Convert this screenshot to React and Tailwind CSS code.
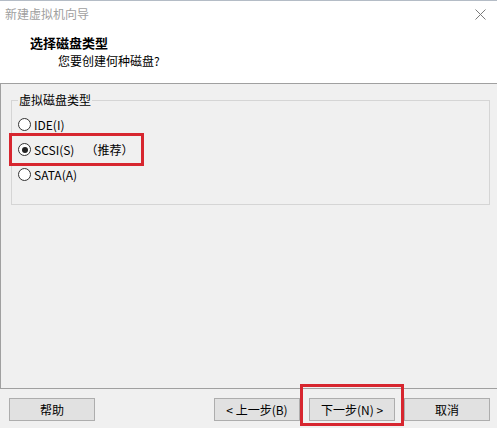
import React from 'react';

const font = { fontFamily: '"Microsoft YaHei", "Noto Sans CJK SC", "Noto Sans", sans-serif' };

function Radio({ checked, label, extra }) {
  return (
    <label className="flex h-[25px] items-center gap-[3px] text-[12px] text-black">
      <span className="flex h-[13px] w-[13px] items-center justify-center rounded-full border border-[#333] bg-white">
        {checked && <span className="h-[6px] w-[6px] rounded-full bg-[#222]" />}
      </span>
      <span>{label}</span>
      {extra && <span className="ml-[8px]">{extra}</span>}
    </label>
  );
}

function Btn({ children }) {
  return (
    <button className="flex h-[23px] w-[86px] items-center justify-center border border-[#adadad] bg-[#e1e1e1] text-[12px] text-black">
      {children}
    </button>
  );
}

export default function App() {
  return (
    <div className="flex h-[428px] w-[499px] bg-white" style={font}>
      <div className="flex w-[497px] flex-col border-t border-[#b4bcc6]">
        <div className="flex h-[26px] items-center justify-between pl-[5px] pr-[10px]">
          <span className="text-[12px] text-[#a0a0a0]">新建虚拟机向导</span>
          <svg width="11" height="11" viewBox="0 0 11 11" className="mr-[1px]">
            <path d="M0.5 0.5 L10.5 10.5 M10.5 0.5 L0.5 10.5" stroke="#7a7a7a" strokeWidth="1" />
          </svg>
        </div>
        <div className="h-[57px] border-b border-[#a0a0a0] pt-[7px]">
          <div className="pl-[30px] text-[13px] font-bold leading-[18px] text-black">选择磁盘类型</div>
          <div className="pl-[58px] text-[12px] leading-[18px] text-black">您要创建何种磁盘?</div>
        </div>
        <div className="flex flex-1 flex-col border-b border-l border-[#a0a0a0] bg-[#f0f0f0]">
          <div className="relative flex-1 pl-[10px] pr-[7px] pt-[9px]">
            <fieldset className="h-[112px] border border-[#d5d5d5] px-[6px]">
              <legend className="px-[1px] text-[12px] leading-[14px] text-black">虚拟磁盘类型</legend>
              <div className="pt-[5px]">
                <Radio label="IDE(I)" />
                <Radio checked label="SCSI(S)" extra="（推荐）" />
                <Radio label="SATA(A)" />
              </div>
            </fieldset>
            <div className="absolute left-[8px] top-[49px] h-[33px] w-[135px] border-[3px] border-[#d7262f]" />
          </div>
        </div>
        <div className="relative flex h-[39px] bg-[#f0f0f0] pl-[9px] pt-[9px]">
          <Btn>帮助</Btn>
          <div className="ml-[119px] flex gap-[9px]">
            <Btn>&lt; 上一步(B)</Btn>
            <Btn>下一步(N) &gt;</Btn>
            <Btn>取消</Btn>
          </div>
          <div className="absolute left-[300px] top-[-5px] h-[42px] w-[104px] border-[3px] border-[#d7262f]" />
        </div>
      </div>
    </div>
  );
}
